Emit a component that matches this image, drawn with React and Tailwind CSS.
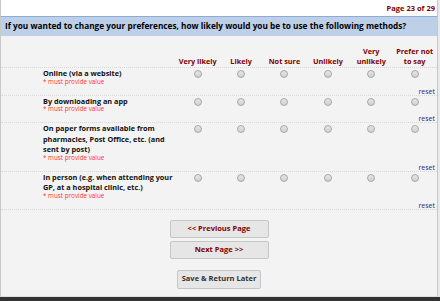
import React from "react";

const cols = [
  ["Very likely"],
  ["Likely"],
  ["Not sure"],
  ["Unlikely"],
  ["Very", "unlikely"],
  ["Prefer not", "to say"],
];

const rows = [
  ["Online (via a website)"],
  ["By downloading an app"],
  ["On paper forms available from", "pharmacies, Post Office, etc. (and", "sent by post)"],
  ["In person (e.g. when attending your", "GP, at a hospital clinic, etc.)"],
];

function Radio() {
  return (
    <div className="w-[8px] h-[8px] rounded-full border border-[#a8a8a8] bg-[linear-gradient(#e6e6e6,#d0d0d0)]" />
  );
}

export default function App() {
  return (
    <div
      className="w-[440px] h-[301px] bg-[#e9e9e9] overflow-hidden flex flex-col"
      style={{ fontFamily: '"Open Sans", "Noto Sans", sans-serif' }}
    >
      <div className="w-[438px] flex-1 bg-[#f3f3f3] border-l border-r border-[#c8c8c8] border-b border-b-[#e0e0e0] flex flex-col">
        <div className="bg-white h-[16px] flex items-center justify-end pr-[2px] pt-[2px]">
          <span className="text-[7.5px] font-bold text-[#800000] leading-none">Page 23 of 29</span>
        </div>
        <div className="bg-[#bdd0e8] border-t border-[#8eaad6] h-[20px] flex items-center pl-[4px]">
          <span className="text-[8.25px] font-bold text-black leading-none whitespace-nowrap">
            If you wanted to change your preferences, how likely would you be to use the following methods?
          </span>
        </div>
        <div className="flex h-[31px] items-end pb-[1px]">
          <div className="w-[175px]" />
          {cols.map((c, i) => (
            <div key={i} className="w-[43.4px] flex flex-col items-center text-[7.3px] font-bold text-[#800000] leading-[9.5px] text-center">
              {c.map((l, j) => (
                <span key={j} className="whitespace-nowrap">{l}</span>
              ))}
            </div>
          ))}
        </div>
        {rows.map((r, i) => (
          <div key={i} className="border-t border-dotted border-[#d8d8d8] flex flex-col">
            <div className="flex">
              <div className="w-[175px] pl-[42px]">
                <div className="text-[7.3px] font-bold text-[#111] leading-[10.5px]">
                  {r.map((l, j) => (
                    <div key={j} className="whitespace-nowrap">{l}</div>
                  ))}
                </div>
                <div className="text-[6.3px] text-[#ff3333] leading-[7px] -mt-[1px]">* must provide value</div>
              </div>
              {cols.map((c, j) => (
                <div key={j} className="w-[43.4px] flex justify-center pt-[2px]">
                  <Radio />
                </div>
              ))}
            </div>
            <div className="flex justify-end pr-[2px] mt-[3px]">
              <span className="text-[7px] text-[#2a2a80] leading-[7px]">reset</span>
            </div>
          </div>
        ))}
        <div className="border-t border-dotted border-[#d8d8d8] flex flex-col items-center pt-[10px]">
          <button className="w-[99px] h-[18px] bg-[#e6e6e6] border border-[#c6c6c6] rounded-[2px] text-[7.5px] font-bold text-[#800000] leading-none">
            &lt;&lt; Previous Page
          </button>
          <button className="mt-[3px] w-[99px] h-[18px] bg-[#e6e6e6] border border-[#c6c6c6] rounded-[2px] text-[7.5px] font-bold text-[#800000] leading-none">
            Next Page &gt;&gt;
          </button>
          <button className="mt-[11px] w-[84px] h-[19px] bg-[#e6e6e6] border border-[#c6c6c6] rounded-[2px] text-[7.5px] font-bold text-[#333] leading-none">
            Save &amp; Return Later
          </button>
        </div>
      </div>
      <div className="h-[4px] bg-[#333]" />
    </div>
  );
}
